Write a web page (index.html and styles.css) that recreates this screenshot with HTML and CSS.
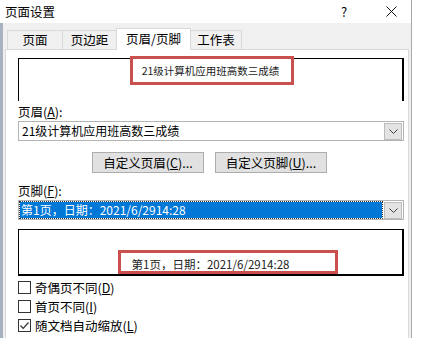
FILE: index.html
```html
<!DOCTYPE html>
<html lang="zh-CN">
<head>
    <meta charset="UTF-8">
    <title>页面设置</title>
    <link rel="stylesheet" href="styles.css">
</head>
<body>

    <div class="window">
        <div class="titlebar">
            <span class="title">页面设置</span>
            <span class="help">?</span>
            <span class="close">
                <svg width="11" height="11" viewBox="0 0 11 11"><path d="M0.5 0.5L10.5 10.5M10.5 0.5L0.5 10.5" stroke="#111" stroke-width="1"/></svg>
            </span>
        </div>

        <div class="body">
            <div class="tabs">
                <div class="tab t1">页面</div>
                <div class="tab t2">页边距</div>
                <div class="tab t3 active">页眉/页脚</div>
                <div class="tab t4">工作表</div>
            </div>

            <div class="panel">
                <div class="preview header-preview">
                    <div class="preview-text small">21级计算机应用班高数三成绩</div>
                    <div class="mark mark-header"></div>
                </div>

                <div class="label">页眉(<u>A</u>):</div>
                <div class="combo">
                    <div class="combo-value">21级计算机应用班高数三成绩</div>
                    <div class="combo-btn">
                        <svg width="9" height="5" viewBox="0 0 9 5"><path d="M0.5 0.5L4.5 4.5L8.5 0.5" fill="none" stroke="#444" stroke-width="1"/></svg>
                    </div>
                </div>

                <div class="buttons">
                    <div class="btn">自定义页眉(<u>C</u>)...</div>
                    <div class="btn">自定义页脚(<u>U</u>)...</div>
                </div>

                <div class="label label-footer">页脚(<u>F</u>):</div>
                <div class="combo focused">
                    <div class="combo-value"><span class="selected">第1页，日期：2021/6/2914:28</span></div>
                    <div class="combo-btn">
                        <svg width="9" height="5" viewBox="0 0 9 5"><path d="M0.5 0.5L4.5 4.5L8.5 0.5" fill="none" stroke="#444" stroke-width="1"/></svg>
                    </div>
                </div>

                <div class="preview footer-preview">
                    <div class="preview-text">第1页，日期：2021/6/2914:28</div>
                    <div class="mark mark-footer"></div>
                </div>

                <div class="checks">
                    <div class="check"><span class="box"></span>奇偶页不同(<u>D</u>)</div>
                    <div class="check"><span class="box"></span>首页不同(<u>I</u>)</div>
                    <div class="check"><span class="box"><svg width="11" height="11" viewBox="0 0 11 11"><path d="M1.5 5.5L4.2 8.3L9.5 2.5" fill="none" stroke="#333" stroke-width="1.2"/></svg></span>随文档自动缩放(<u>L</u>)</div>
                </div>
            </div>
        </div>
    </div>

</body>
</html>
```

FILE: styles.css
```css
* {
    margin: 0;
    padding: 0;
    box-sizing: border-box;
    font-family: "Noto Sans CJK SC", "Noto Sans", sans-serif;
}
body {
    width: 422px;
    height: 338px;
    overflow: hidden;
    background: #fff;
    color: #000;
    font-size: 12px;
}
.window {
    width: 412px;
    height: 338px;
    display: flex;
    flex-direction: column;
    border-right: 1px solid #a9a9a9;
}
.titlebar {
    height: 27px;
    background: #fff;
    display: flex;
    align-items: center;
    padding-left: 5px;
}
.title {
    flex: 1;
    font-size: 12.5px;
}
.help {
    font-size: 13px;
    width: 14px;
    margin-right: 35px;
    text-align: center;
}
.close {
    width: 11px;
    height: 11px;
    margin-right: 14px;
    display: flex;
}
.body {
    flex: 1;
    background: #f0f0f0;
    border-left: 3px solid #a8b2bf;
    padding: 5px 2px 0 2px;
    display: flex;
    flex-direction: column;
}
.tabs {
    height: 21px;
    display: flex;
    align-items: flex-end;
    padding-left: 2px;
}
.tab {
    height: 19px;
    line-height: 18px;
    text-align: center;
    background: #f0f0f0;
    border: 1px solid #d9d9d9;
    border-bottom: none;
    margin-left: -1px;
    font-size: 12.5px;
}
.t1 { width: 56px; margin-left: 0; }
.t2 { width: 55px; }
.t3 { width: 75px; }
.t4 { width: 52px; }
.tab.active {
    height: 22px;
    line-height: 19px;
    background: #fff;
    margin-bottom: -1px;
    position: relative;
}
.panel {
    flex: 1;
    background: #fff;
    border: 1px solid #d9d9d9;
    border-bottom: none;
    padding: 8px 4px 0 12px;
}
.preview {
    position: relative;
    border-top: 1px solid #000;
    border-left: 1px solid #000;
    border-right: 2px solid #000;
    display: flex;
    justify-content: center;
}
.header-preview {
    height: 43px;
    padding-top: 4px;
}
.footer-preview {
    height: 47px;
    margin-top: 9px;
    border-bottom: 2px solid #000;
    padding-top: 26px;
}
.preview-text {
    font-size: 11.5px;
    line-height: 16px;
    color: #222;
}
.preview-text.small {
    font-size: 10.5px;
}
.mark {
    position: absolute;
    border: 3px solid #c9504f;
}
.mark-header {
    left: 111px;
    top: -3px;
    width: 164px;
    height: 29px;
}
.mark-footer {
    left: 99px;
    top: 20px;
    width: 220px;
    height: 24px;
}
.label {
    height: 20px;
    padding-top: 3px;
    line-height: 15px;
    font-size: 12.5px;
}
.label-footer {
    height: 27px;
    padding-top: 10px;
}
.combo {
    height: 20px;
    border: 1px solid #b4b4b4;
    background: #fff;
    display: flex;
    align-items: center;
    padding: 1px;
}
.combo-value {
    flex: 1;
    height: 16px;
    line-height: 16px;
    padding-left: 2px;
    font-size: 12px;
}
.combo.focused .combo-value {
    border: 1px dotted #333;
    padding-left: 0;
    height: 18px;
    margin-left: -1px;
}
.selected {
    display: block;
    height: 16px;
    line-height: 16px;
    background: #0078d7;
    color: #fff;
    padding-left: 1px;
}
.combo-btn {
    width: 18px;
    height: 17px;
    background: #e3e3e3;
    border: 1px solid #bcbcbc;
    display: flex;
    align-items: center;
    justify-content: center;
    margin-left: 1px;
}
.buttons {
    display: flex;
    gap: 11px;
    padding-left: 74px;
    margin-top: 11px;
}
.btn {
    width: 112px;
    height: 21px;
    line-height: 19px;
    background: #e1e1e1;
    border: 1px solid #adadad;
    text-align: center;
    font-size: 12.5px;
}
.checks {
    margin-top: 5px;
}
.check {
    height: 19px;
    display: flex;
    align-items: flex-start;
    line-height: 13px;
    font-size: 12.5px;
}
.box {
    width: 13px;
    height: 13px;
    border: 1px solid #333;
    margin-right: 4px;
    display: flex;
    align-items: center;
    justify-content: center;
}
```
